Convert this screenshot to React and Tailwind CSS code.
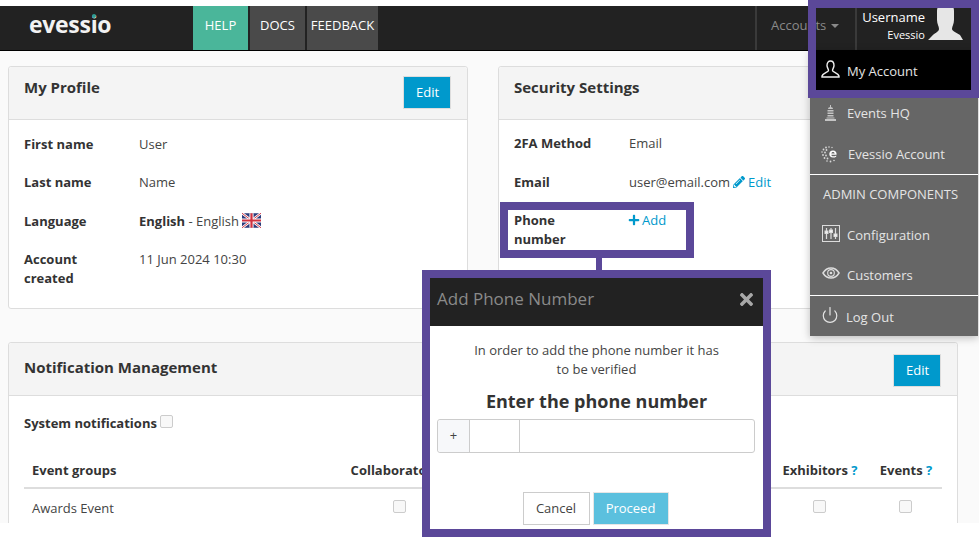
import { FaTimes, FaPlus, FaPencilAlt } from 'react-icons/fa';
import { Power } from 'lucide-react';

const ProfileRow = ({ label, children, className = '' }) => (
  <div className={`flex leading-[19px] ${className}`}>
    <div className="w-[115px] pr-8 font-bold text-[#333]">{label}</div>
    <div className="flex-1 text-[#444]">{children}</div>
  </div>
);

const EditButton = () => (
  <button className="w-[48px] h-[33px] pl-[1px] bg-[#0099cc] border border-[#dddddd] text-white text-[13px]">Edit</button>
);

const Checkbox = ({ className = '' }) => (
  <span className={`inline-block w-[13px] h-[13px] rounded-[2px] border border-[#cccccc] bg-[#f8f8f8] ${className}`} />
);

const Flag = () => (
  <svg width="19" height="15" viewBox="0 0 60 46" className="inline-block ml-[3px] align-[-2px]">
    <rect width="60" height="46" rx="3" fill="#2b3a7a" />
    <path d="M0 0L60 46M60 0L0 46" stroke="#fff" strokeWidth="8" />
    <path d="M0 0L60 46M60 0L0 46" stroke="#d0313f" strokeWidth="3" />
    <path d="M30 0V46M0 23H60" stroke="#fff" strokeWidth="13" />
    <path d="M30 0V46M0 23H60" stroke="#d0313f" strokeWidth="7" />
  </svg>
);

const Avatar = () => (
  <svg width="35" height="34" viewBox="0 0 35 34">
    <path d="M11 0H24C25 0 26 2 26 5V14C26 18 24 20 24 23C24 25 29 27 32 29L35 34H0L3 31C6 27 11 26 11 23C11 20 9 18 9 14V5C9 2 10 0 11 0Z" fill="#e6e6e6" />
  </svg>
);

const MenuRow = ({ icon, iconClass = '', children, className = 'pt-[2px]' }) => (
  <div className={`flex items-center h-[40px] text-[13px] text-[#e4e4e4] ${className}`}>
    <span className={`w-[37px] flex justify-center ${iconClass}`}>{icon}</span>
    <span>{children}</span>
  </div>
);

const UserIcon = () => (
  <svg width="19" height="18" viewBox="0 0 19 18" fill="none" stroke="#eee" strokeWidth="1.4">
    <path d="M6 5.5C6 2.5 7.5 1 9.5 1S13 2.5 13 5.5C13 7.5 11.5 9 11.5 10.5C11.5 12 17 13 18 16V17H1V16C2 13 7.5 12 7.5 10.5C7.5 9 6 7.5 6 5.5Z" />
  </svg>
);

const TowerIcon = () => (
  <svg width="11" height="16" viewBox="0 0 11 16" fill="#c4c4c4">
    <rect x="5" y="0" width="1" height="2" />
    <path d="M3 4C3 2.8 4 2 5.5 2S8 2.8 8 4Z" />
    <rect x="2.5" y="5" width="6" height="1.5" />
    <rect x="2.5" y="7.5" width="6" height="1.5" />
    <rect x="2.5" y="10" width="6" height="1.5" />
    <rect x="1.5" y="12.5" width="8" height="1" />
    <rect x="0" y="14" width="11" height="2" />
  </svg>
);

const EvessioIcon = () => (
  <svg width="18" height="17" viewBox="0 0 18 17" fill="#d8d8d8">
    <circle cx="5" cy="1.5" r="0.9" />
    <circle cx="8" cy="1" r="0.8" />
    <circle cx="11" cy="1.5" r="0.7" />
    <circle cx="2.5" cy="3.5" r="0.9" />
    <circle cx="5.5" cy="4" r="0.9" />
    <circle cx="1" cy="6" r="0.8" />
    <circle cx="4" cy="6.5" r="0.9" />
    <circle cx="2" cy="9" r="0.9" />
    <circle cx="5" cy="9.5" r="0.9" />
    <circle cx="3.5" cy="12" r="0.9" />
    <circle cx="6.5" cy="12.5" r="0.9" />
    <circle cx="6" cy="15" r="0.8" />
    <circle cx="9.5" cy="15.5" r="0.9" />
    <circle cx="13" cy="14.5" r="0.8" />
    <path d="M12 4.5C9.5 4.5 8.3 6.2 8.3 8C8.3 10.2 9.7 11.6 12 11.6C13.4 11.6 14.4 11.2 15.2 10.7V9.4C14.3 10 13.3 10.3 12.2 10.3C11.1 10.3 10.5 9.8 10.3 8.8H15.6C15.8 6.4 14.6 4.5 12 4.5ZM10.3 7.5C10.5 6.5 11.1 5.9 12 5.9C12.9 5.9 13.6 6.5 13.7 7.5Z" fill="#fff" />
  </svg>
);

const ConfigIcon = () => (
  <svg width="18" height="17" viewBox="0 0 18 17" fill="none" stroke="#dcdcdc">
    <rect x="0.5" y="0.5" width="17" height="16" strokeWidth="1" />
    <path d="M4.5 3V14M9 3V14M13.5 3V14" strokeWidth="1.2" />
    <rect x="3" y="6" width="3" height="2.5" fill="#f2f2f2" />
    <rect x="7.5" y="5" width="3" height="2.5" fill="#f2f2f2" />
    <rect x="12" y="9" width="3" height="2.5" fill="#f2f2f2" />
  </svg>
);

const EyeIcon = () => (
  <svg width="18" height="12" viewBox="0 0 19 13" fill="none" stroke="#dddddd">
    <path d="M0.8 6.5C3 2.8 6 1 9.5 1S16 2.8 18.2 6.5C16 10.2 13 12 9.5 12S3 10.2 0.8 6.5Z" strokeWidth="1.6" />
    <circle cx="9.5" cy="6.5" r="3.6" strokeWidth="1.2" />
    <circle cx="9.5" cy="6.5" r="1.4" fill="#dddddd" stroke="none" />
  </svg>
);

const App = () => {
  return (
    <div className="relative w-[979px] h-[537px] overflow-hidden bg-white font-['Open_Sans',sans-serif] text-[13px]">
      {/* top bar */}
      <header className="mt-[6px] h-[45px] flex bg-[#222222] border-b border-black text-white">
        <div className="relative w-[193px] pl-[29px] pt-[3px] text-[23px] leading-[30px] font-bold tracking-[-0.3px] text-[#f2f2f2]">
          evessio
          <span className="absolute left-[92px] top-[8px] w-[4px] h-[4px] rounded-full bg-[#2e9c92]" />
        </div>
        <div className="flex gap-[2px] h-[44px] text-[13px] leading-[39px]">
          <a className="w-[55px] bg-[#4ab69a] text-center">HELP</a>
          <a className="w-[55px] bg-[#4a4a4a] text-center">DOCS</a>
          <a className="w-[71px] bg-[#4a4a4a] text-center">FEEDBACK</a>
        </div>
        <div className="ml-auto flex h-[44px]">
          <div className="w-[102px] border-l-2 border-r-2 border-[#3a3a3a] pl-[14px] leading-[38px] text-[#8a8a8a]">
            Accounts
            <span className="inline-block ml-[5px] align-[2px] border-x-[4px] border-x-transparent border-t-[4px] border-t-[#8a8a8a]" />
          </div>
          <div className="w-[122px] flex pl-[4px]">
            <div className="w-[64px] text-right">
              <div className="leading-[20px] pt-[1px]">Username</div>
              <div className="text-[11px] leading-[16px]">Evessio</div>
            </div>
            <div className="ml-[3px]"><Avatar /></div>
          </div>
        </div>
      </header>

      {/* page content */}
      <main className="h-[472px] overflow-hidden bg-[#fafafa] px-[8px] pt-[15px]">
        <div className="grid grid-cols-[460px_460px] gap-[30px]">
          <section className="h-[243px] rounded-[3px] border border-[#dddddd] bg-white">
            <div className="h-[53px] flex justify-between border-b border-[#dddddd] bg-[#f4f4f4] pl-[15px] pr-[16px] rounded-t-[3px]">
              <h2 className="pt-[9px] text-[15px] leading-[22px] font-bold text-[#333]">My Profile</h2>
              <div className="pt-[9px]"><EditButton /></div>
            </div>
            <div className="pl-[15px] pt-[15px]">
              <ProfileRow label="First name">User</ProfileRow>
              <ProfileRow label="Last name" className="mt-[19px]">Name</ProfileRow>
              <ProfileRow label="Language" className="mt-[20px]">
                <b className="font-bold text-[#333]">English</b> - English<Flag />
              </ProfileRow>
              <ProfileRow label="Account created" className="mt-[19px]">11 Jun 2024 10:30</ProfileRow>
            </div>
          </section>

          <section className="h-[243px] rounded-[3px] border border-[#dddddd] bg-white">
            <div className="h-[53px] border-b border-[#dddddd] bg-[#f4f4f4] pl-[15px] rounded-t-[3px]">
              <h2 className="pt-[9px] text-[15px] leading-[22px] font-bold text-[#333]">Security Settings</h2>
            </div>
            <div className="pl-[15px] pt-[14px]">
              <ProfileRow label="2FA Method">Email</ProfileRow>
              <ProfileRow label="Email" className="mt-[20px]">
                user@email.com
                <span className="text-[#0099cc]">
                  <FaPencilAlt className="inline-block ml-[3px] mr-[3px] w-[12px] h-[12px] align-[-1px]" />Edit
                </span>
              </ProfileRow>
              <ProfileRow label="Phone number" className="mt-[19px]">
                <span className="text-[#0099cc]">
                  <FaPlus className="inline-block -ml-[1px] mr-[2px] w-[12px] h-[12px] align-[-1px]" />Add
                </span>
              </ProfileRow>
            </div>
          </section>
        </div>

        <section className="mt-[33px] w-[950px] h-[300px] rounded-[3px] border border-[#dddddd] bg-white">
          <div className="h-[53px] flex justify-between border-b border-[#dddddd] bg-[#f4f4f4] pl-[15px] pr-[16px] rounded-t-[3px]">
            <h2 className="pt-[13px] text-[15px] leading-[22px] font-bold text-[#333]">Notification Management</h2>
            <div className="pt-[11px]"><EditButton /></div>
          </div>
          <div className="px-[15px] pt-[18px]">
            <div className="flex items-start leading-[19px] font-bold text-[#333]">
              System notifications
              <Checkbox className="ml-[3px] mt-[1px]" />
            </div>
            <table className="mt-[28px] w-[918px] table-fixed">
              <thead>
                <tr className="border-b-2 border-[#dddddd] font-bold text-[#333] leading-[19px]">
                  <th className="w-[319px] pl-[8px] pb-[7px] text-left font-bold">Event groups</th>
                  <th className="w-[113px] pb-[7px] font-bold">Collaborators <span className="text-[#0099cc]">?</span></th>
                  <th className="pb-[7px]" />
                  <th className="w-[100px] pb-[7px] font-bold">Exhibitors <span className="text-[#0099cc]">?</span></th>
                  <th className="w-[72px] pb-[7px] font-bold">Events <span className="text-[#0099cc]">?</span></th>
                </tr>
              </thead>
              <tbody>
                <tr className="leading-[19px] text-[#444]">
                  <td className="pl-[8px] pt-[10px]">Awards Event</td>
                  <td className="pt-[10px] text-center"><Checkbox /></td>
                  <td />
                  <td className="pt-[10px] pr-[1px] text-center"><Checkbox /></td>
                  <td className="pt-[10px] pr-[1px] text-center"><Checkbox /></td>
                </tr>
              </tbody>
            </table>
          </div>
        </section>
      </main>

      {/* account dropdown */}
      <div className="absolute left-[810px] top-[50px] w-[168px] h-[286px] bg-[#666666] shadow-[0_2px_8px_rgba(0,0,0,0.25)]">
        <MenuRow icon={<UserIcon />} iconClass="pl-[3px] pb-[6px]" className="bg-black pt-[4px]">My Account</MenuRow>
        <div className="h-[44px] pt-[3px]">
          <MenuRow icon={<TowerIcon />} iconClass="pl-[3px] pb-[3px]">Events HQ</MenuRow>
        </div>
        <MenuRow icon={<EvessioIcon />} iconClass="pl-[3px] pb-[2px]"><span className="ml-[1px]">Evessio Account</span></MenuRow>
        <div className="h-[41px] border-t border-white pl-[13px] leading-[38px] text-[#e4e4e4]">ADMIN COMPONENTS</div>
        <MenuRow icon={<ConfigIcon />} iconClass="pl-[5px] pb-[6px]">Configuration</MenuRow>
        <MenuRow icon={<EyeIcon />} iconClass="pl-[5px] pb-[6px]">Customers</MenuRow>
        <div className="h-[41px] border-t border-white">
          <MenuRow icon={<Power size={18} strokeWidth={1.6} color="#e4e4e4" />} iconClass="pl-[3px] pb-[6px]" className="pt-[4px]"><span className="-ml-[1px]">Log Out</span></MenuRow>
        </div>
      </div>

      {/* highlight around the account menu */}
      <div className="absolute left-[808px] top-0 w-[171px] h-[98px] border-[8px] border-[#5b4899]" />

      {/* highlight around the phone row */}
      <div className="absolute left-[500px] top-[202px] w-[194px] h-[56px] border-[8px] border-[#5b4899]" />
      <div className="absolute left-[596px] top-[258px] w-[6px] h-[12px] bg-[#5b4899]" />

      {/* phone modal */}
      <div className="absolute left-[422px] top-[270px] w-[349px] h-[267px] border-[8px] border-[#5b4899] bg-white">
        <div className="h-[48px] flex items-center justify-between bg-[#222222] pl-[7px] pr-[7px] pb-[6px]">
          <span className="text-[17px] text-[#8a8a8a]">Add Phone Number</span>
          <FaTimes className="w-[19px] h-[19px] text-[#a8a8a8]" />
        </div>
        <div className="px-[7px] pt-[15px] text-center">
          <p className="mx-auto w-[250px] text-[13px] leading-[19px] text-[#444]">
            In order to add the phone number it has to be verified
          </p>
          <h3 className="mt-[9px] text-[18px] leading-[26px] font-bold text-[#333]">Enter the phone number</h3>
          <div className="mt-[5px] w-[318px] h-[34px] flex rounded-[3px] border border-[#cccccc] text-left">
            <span className="w-[32px] flex items-center justify-center border-r border-[#cccccc] bg-[#f7f8fa] text-[#444] rounded-l-[3px]">+</span>
            <span className="w-[50px] border-r border-[#cccccc]" />
            <span className="flex-1" />
          </div>
          <div className="mt-[39px] pr-[2px] flex justify-center gap-[3px]">
            <button className="w-[67px] h-[33px] border border-[#cccccc] bg-white text-[#444]">Cancel</button>
            <button className="w-[76px] h-[33px] border border-[#e6e6e6] bg-[#5bc0de] font-medium text-white">Proceed</button>
          </div>
        </div>
      </div>
    </div>
  );
};

export default App;
